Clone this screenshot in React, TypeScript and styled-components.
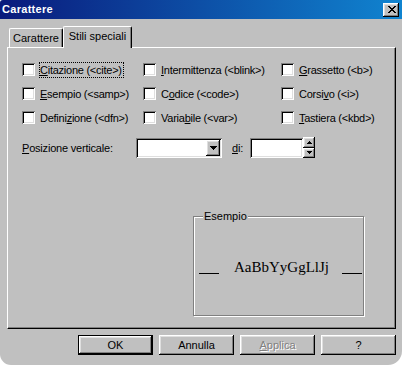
import React from 'react';
import styled, { createGlobalStyle } from 'styled-components';

const GlobalStyle = createGlobalStyle`
  html, body {
    margin: 0;
    padding: 0;
    background: #fff;
  }
  * {
    box-sizing: border-box;
  }
`;

const UI_FONT = `"Liberation Sans", Arial, sans-serif`;

type Option = {
  pre: string;
  key: string;
  post: string;
  focused?: boolean;
};

const options: Option[] = [
  { pre: '', key: 'C', post: 'itazione (<cite>)', focused: true },
  { pre: '', key: 'I', post: 'ntermittenza (<blink>)' },
  { pre: '', key: 'G', post: 'rassetto (<b>)' },
  { pre: '', key: 'E', post: 'sempio (<samp>)' },
  { pre: 'C', key: 'o', post: 'dice (<code>)' },
  { pre: 'Corsi', key: 'v', post: 'o (<i>)' },
  { pre: 'Defini', key: 'z', post: 'ione (<dfn>)' },
  { pre: 'Varia', key: 'b', post: 'ile (<var>)' },
  { pre: '', key: 'T', post: 'astiera (<kbd>)' },
];

const App: React.FC<{}> = () => {
  return (
    <>
      <GlobalStyle />
      <Window>
        <TitleBar>
          <Title>Carattere</Title>
          <CloseButton>
            <svg width="8" height="7" viewBox="0 0 8 7" shapeRendering="crispEdges">
              <path
                d="M0 0h2v1H0zM6 0h2v1H6zM1 1h2v1H1zM5 1h2v1H5zM2 2h4v1H2zM3 3h2v1H3zM2 4h4v1H2zM1 5h2v1H1zM5 5h2v1H5zM0 6h2v1H0zM6 6h2v1H6z"
                fill="#000"
              />
            </svg>
          </CloseButton>
        </TitleBar>

        <Body>
          <TabStrip>
            <Tab $width={54}>Carattere</Tab>
            <Tab $width={69} $active>
              Stili speciali
            </Tab>
          </TabStrip>

          <Panel>
            <OptionGrid>
              {options.map((o) => (
                <OptionCell key={o.post}>
                  <Checkbox />
                  <OptionLabel $focused={o.focused}>
                    {o.pre}
                    <u>{o.key}</u>
                    {o.post}
                  </OptionLabel>
                </OptionCell>
              ))}
            </OptionGrid>

            <PositionRow>
              <FieldLabel $width={114}>
                <u>P</u>osizione verticale:
              </FieldLabel>
              <Combo>
                <DropButton>
                  <svg width="7" height="4" viewBox="0 0 7 4" shapeRendering="crispEdges">
                    <path d="M0 0h7v1H0zM1 1h5v1H1zM2 2h3v1H2zM3 3h1v1H3z" fill="#000" />
                  </svg>
                </DropButton>
              </Combo>
              <FieldLabel $width={18} $gap={10}>
                <u>d</u>i:
              </FieldLabel>
              <SpinInput />
              <SpinButtons>
                <SpinButton>
                  <svg width="5" height="3" viewBox="0 0 5 3" shapeRendering="crispEdges">
                    <path d="M2 0h1v1H2zM1 1h3v1H1zM0 2h5v1H0z" fill="#000" />
                  </svg>
                </SpinButton>
                <SpinButton>
                  <svg width="5" height="3" viewBox="0 0 5 3" shapeRendering="crispEdges">
                    <path d="M0 0h5v1H0zM1 1h3v1H1zM2 2h1v1H2z" fill="#000" />
                  </svg>
                </SpinButton>
              </SpinButtons>
            </PositionRow>

            <GroupBox>
              <Legend>Esempio</Legend>
              <SampleRow>
                <SampleLine />
                <SampleText>AaBbYyGgLlJj</SampleText>
                <SampleLine />
              </SampleRow>
            </GroupBox>
          </Panel>

          <ButtonRow>
            <Button $default>OK</Button>
            <Button>Annulla</Button>
            <Button $disabled>
              <u>A</u>pplica
            </Button>
            <Button>?</Button>
          </ButtonRow>
        </Body>
      </Window>
    </>
  );
};

export default App;

const raised = `
  background: #c0c0c0;
  box-shadow: inset -1px -1px #000, inset 1px 1px #fff, inset -2px -2px #808080, inset 2px 2px #dfdfdf;
`;

const sunken = `
  background: #fff;
  box-shadow: inset 1px 1px #808080, inset -1px -1px #fff, inset 2px 2px #000, inset -2px -2px #dfdfdf;
`;

const Window = styled.div`
  width: 402px;
  height: 365px;
  display: flex;
  flex-direction: column;
  background: #c0c0c0;
  border-radius: 3px 0 14px 11px;
  overflow: hidden;
  font-family: ${UI_FONT};
  font-size: 11px;
  color: #000;
`;

const TitleBar = styled.div`
  height: 19px;
  flex: none;
  display: flex;
  align-items: center;
  padding: 0 3px 0 2px;
  background: linear-gradient(to right, #0a1a7c, #1084d0);
`;

const Title = styled.span`
  color: #fff;
  font-weight: bold;
  font-size: 11px;
  line-height: 13px;
  letter-spacing: 0.3px;
`;

const CloseButton = styled.div`
  ${raised}
  margin-left: auto;
  width: 16px;
  height: 14px;
  display: flex;
  align-items: center;
  justify-content: center;
  padding-left: 1px;
`;

const Body = styled.div`
  display: flex;
  flex-direction: column;
  padding: 0 6px 0 7px;
`;

const TabStrip = styled.div`
  display: flex;
  align-items: flex-end;
  height: 21px;
  margin-top: 7px;
  padding-left: 2px;
`;

const Tab = styled.div<{ $active?: boolean; $width: number }>`
  position: relative;
  z-index: ${(p) => (p.$active ? 1 : 0)};
  width: ${(p) => p.$width}px;
  height: ${(p) => (p.$active ? 22 : 19)}px;
  margin-bottom: ${(p) => (p.$active ? -1 : 0)}px;
  padding-top: 3px;
  text-align: center;
  line-height: 13px;
  background: #c0c0c0;
  border-top: 1px solid #fff;
  border-left: 1px solid #fff;
  border-right: 1px solid #000;
  border-radius: 2px 2px 0 0;
  box-shadow: inset -1px 0 #808080;
`;

const Panel = styled.div`
  height: 282px;
  display: flex;
  flex-direction: column;
  padding: 15px 0 0 14px;
  border-top: 1px solid #fff;
  border-left: 1px solid #fff;
  border-right: 1px solid #000;
  border-bottom: 1px solid #000;
  box-shadow: inset -1px -1px #808080;
`;

const OptionGrid = styled.div`
  display: grid;
  grid-template-columns: 121px 138px auto;
  grid-auto-rows: 13px;
  row-gap: 11px;
`;

const OptionCell = styled.div`
  display: flex;
  align-items: center;
  gap: 4px;
  height: 13px;
`;

const Checkbox = styled.span`
  ${sunken}
  flex: none;
  width: 13px;
  height: 13px;
`;

const OptionLabel = styled.span<{ $focused?: boolean }>`
  flex: none;
  height: 16px;
  line-height: 14px;
  padding: 0 1px 0 0;
  white-space: nowrap;
  letter-spacing: -0.25px;
  border: 1px dotted ${(p) => (p.$focused ? '#000' : 'transparent')};

  u {
    text-underline-offset: 1px;
  }
`;

const PositionRow = styled.div`
  display: flex;
  align-items: center;
  height: 20px;
  margin-top: 14px;
`;

const FieldLabel = styled.span<{ $width: number; $gap?: number }>`
  flex: none;
  width: ${(p) => p.$width}px;
  margin-left: ${(p) => p.$gap || 0}px;
  line-height: 13px;
  white-space: nowrap;
  letter-spacing: -0.2px;
`;

const Combo = styled.div`
  ${sunken}
  width: 86px;
  height: 20px;
  display: flex;
  justify-content: flex-end;
  padding: 2px;
`;

const DropButton = styled.div`
  ${raised}
  width: 14px;
  height: 16px;
  display: flex;
  align-items: center;
  justify-content: center;
`;

const SpinInput = styled.div`
  ${sunken}
  width: 53px;
  height: 20px;
`;

const SpinButtons = styled.div`
  display: flex;
  flex-direction: column;
  width: 12px;
  height: 21px;
  margin-top: -1px;
`;

const SpinButton = styled.div`
  ${raised}
  flex: 1;
  display: flex;
  align-items: center;
  justify-content: center;
`;

const GroupBox = styled.div`
  position: relative;
  width: 171px;
  height: 100px;
  margin: 58px 0 0 171px;
  padding: 0 1px 0 5px;
  border: 1px solid #808080;
  box-shadow: inset 1px 1px #fff, 1px 1px #fff;
`;

const Legend = styled.span`
  position: absolute;
  left: 9px;
  top: -7px;
  padding: 0 1px;
  line-height: 13px;
  background: #c0c0c0;
`;

const SampleRow = styled.div`
  display: flex;
  justify-content: space-between;
  height: 13px;
  margin-top: 44px;
`;

const SampleLine = styled.span`
  width: 20px;
  height: 13px;
  border-bottom: 1px solid #000;
`;

const SampleText = styled.span`
  font-family: "Liberation Serif", "Times New Roman", serif;
  font-size: 15px;
  line-height: 13px;
  white-space: nowrap;
  margin-left: 2px;
`;

const ButtonRow = styled.div`
  display: flex;
  justify-content: flex-end;
  gap: 6px;
  margin-top: 6px;
`;

const Button = styled.div<{ $default?: boolean; $disabled?: boolean }>`
  ${raised}
  width: 75px;
  height: 20px;
  display: flex;
  align-items: center;
  justify-content: center;
  line-height: 13px;
  color: ${(p) => (p.$disabled ? '#808080' : '#000')};
  text-shadow: ${(p) => (p.$disabled ? '1px 1px #fff' : 'none')};
  ${(p) =>
    p.$default &&
    `
    border: 1px solid #000;
    box-shadow: inset -1px -1px #000, inset 1px 1px #fff, inset -2px -2px #808080, inset 2px 2px #dfdfdf;
  `}
`;
